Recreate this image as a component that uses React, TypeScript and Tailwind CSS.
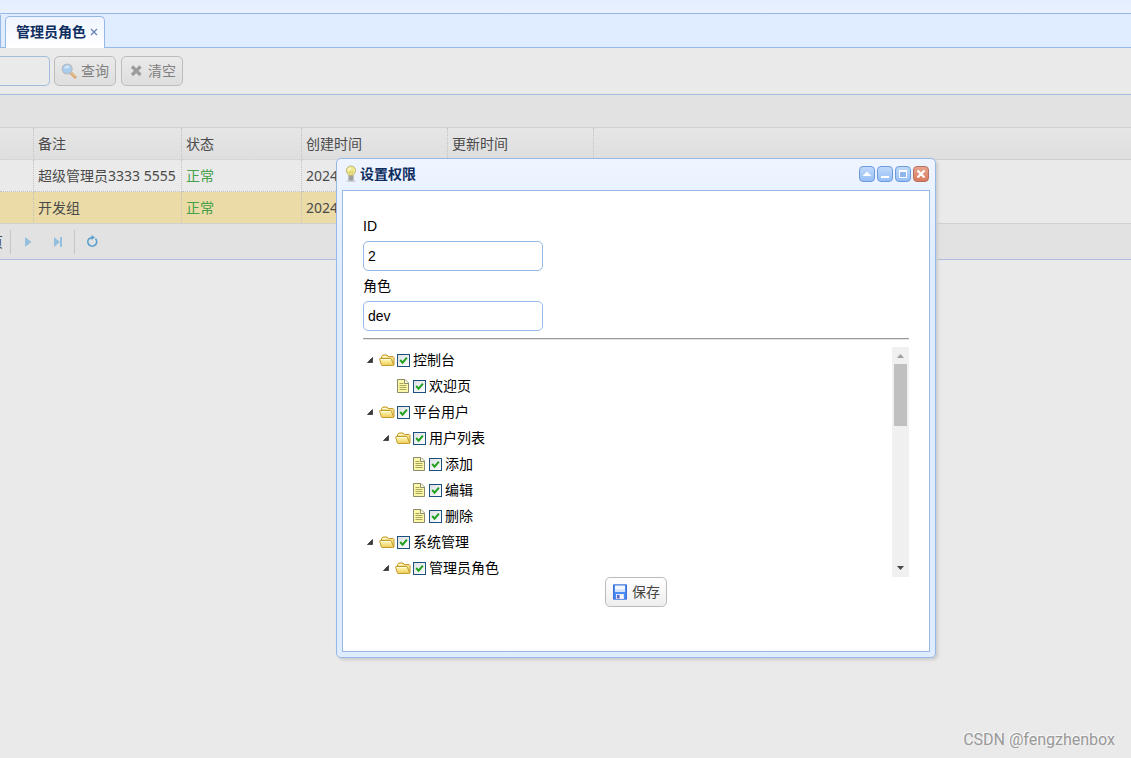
import React from "react";

const FolderIcon = () => (
  <svg className="h-[18px] w-4 shrink-0" viewBox="0 0 16 18">
    <defs>
      <linearGradient id="folder" x1="0" y1="0" x2="0" y2="1">
        <stop offset="0" stopColor="#fffbc4" />
        <stop offset="1" stopColor="#efcc55" />
      </linearGradient>
    </defs>
    <path d="M2.500 13.500V5.500l1.500-1.500h4l1.500 1.500h4.500l1 1v7.500z" fill="#f3df8a" stroke="#c39b2a" />
    <path d="M.6 8q0-.5.5-.5h10.400q.6 0 .8.600l2.200 5.400q.3 1-.6 1H3.200q-.6 0-.8-.6z" fill="url(#folder)" stroke="#c39b2a" />
    <path d="M3.500 5.500h4M1.800 8.500h9.500" stroke="#fffde2" />
  </svg>
);

const FileIcon = () => (
  <svg className="h-[18px] w-4 shrink-0" viewBox="0 0 16 18">
    <path d="M2.500 2.500h7.500l3.500 3.500v9.500h-11z" fill="#fbf8a8" stroke="#8b8a6c" />
    <path d="M9.500 2.500v4h4" fill="#fffde0" stroke="#8b8a6c" />
    <path d="M4.500 6.500h4M4.500 8.500h7M4.500 10.500h7M4.500 12.500h7" stroke="#aaa45c" />
  </svg>
);

const ExpandedArrow = () => (
  <svg className="h-[18px] w-4 shrink-0" viewBox="0 0 16 18">
    <path d="M9.500 6.500v5H4.500z" fill="#3c3c3c" stroke="#333" strokeWidth=".8" strokeLinejoin="round" />
  </svg>
);

const SearchIcon = () => (
  <svg className="size-4" viewBox="0 0 16 16">
    <path d="M9.500 9.500l4.500 4.500" stroke="#cf9c68" strokeWidth="3" strokeLinecap="round" />
    <path d="M10 9.500l4 4" stroke="#efc792" strokeWidth="1.200" strokeLinecap="round" />
    <circle cx="6.200" cy="6" r="4.900" fill="#a9cdec" stroke="#b4bcc5" strokeWidth="1.300" />
    <path d="M3 5.500a3.300 3.300 0 0 1 6-1.500q-2 2-6 1.500" fill="#d3e6f6" />
  </svg>
);

const ClearIcon = () => (
  <svg className="size-4" viewBox="0 0 16 16">
    <path d="M4 3.500l8.500 8.500M12.500 3.500L4 12" stroke="#9c9c9c" strokeWidth="3.200" />
  </svg>
);

const BulbIcon = () => (
  <svg className="h-[18px] w-4" viewBox="0 0 16 18">
    <ellipse cx="9" cy="16" rx="4.500" ry="1" fill="#c6ccd6" />
    <path d="M6.500 10.500C6.500 9 4.300 7.800 4.300 5.500a4.700 4.500 0 0 1 9.400 0c0 2.300-2.200 3.500-2.200 5z" fill="#efe98c" stroke="#bdb587" />
    <path d="M6 5.500a3 2.800 0 0 1 3-2.700q-.5 2-3 2.700" fill="#fffff0" />
    <path d="M8 10L7.500 6.500 9 7.500 10.500 6.500 10 10" fill="none" stroke="#d0c05c" strokeWidth=".7" />
    <path d="M6.500 11h5v3.500l-1 1.500h-3l-1-1.500z" fill="#b4b4b4" />
    <path d="M6.500 12h5M6.500 14h5" stroke="#777" strokeWidth=".7" />
  </svg>
);

const SaveIcon = () => (
  <svg className="size-4" viewBox="0 0 16 16">
    <path d="M1 .5h14v15H1z" fill="#4a8cf5" />
    <path d="M1.500 1h13v14h-13z" fill="none" stroke="#3c6fd6" />
    <path d="M3 1.500h10v6.500H3z" fill="#f2f6fd" />
    <path d="M3 5.500h10v2.500H3z" fill="#d3e2f7" />
    <path d="M4 10h8v5H4z" fill="#dfe0f4" />
    <path d="M5 11h2.500v3.500H5z" fill="#5f6cc4" />
    <path d="M8 10.500h3v4H8z" fill="#f8f8fc" />
  </svg>
);

const actionClass =
  "flex h-[30px] w-[62px] items-center justify-center gap-1 rounded-[5px] border text-sm";

type ToolProps = { label: string; color: "blue" | "red"; children: React.ReactNode };

const WindowTool = ({ label, color, children }: ToolProps) => (
  <button
    type="button"
    aria-label={label}
    className={
      color === "red"
        ? "size-4 rounded-[4px] border border-[#b5705f] bg-linear-to-b from-[#e9a48e] to-[#d87a5e]"
        : "size-4 rounded-[4px] border border-[#6b9bd8] bg-linear-to-b from-[#c0d9fb] to-[#97bff5]"
    }
  >
    <svg className="size-[14px]" viewBox="0 0 14 14">
      {children}
    </svg>
  </button>
);

type Node = { text: string; depth: number; leaf?: boolean };

const nodes: Node[] = [
  { text: "控制台", depth: 0 },
  { text: "欢迎页", depth: 1, leaf: true },
  { text: "平台用户", depth: 0 },
  { text: "用户列表", depth: 1 },
  { text: "添加", depth: 2, leaf: true },
  { text: "编辑", depth: 2, leaf: true },
  { text: "删除", depth: 2, leaf: true },
  { text: "系统管理", depth: 0 },
  { text: "管理员角色", depth: 1 },
];

const indents = ["pl-0", "pl-4", "pl-8"];

const TreeRow = ({ node }: { node: Node }) => (
  <li className={`flex h-[26px] items-center ${indents[node.depth]}`}>
    {node.leaf ? <span className="w-4" /> : <ExpandedArrow />}
    {node.leaf ? <FileIcon /> : <FolderIcon />}
    <label className="flex items-center gap-[3px] pl-0.5">
      <span className="relative size-[13px]">
        <input
          type="checkbox"
          defaultChecked
          className="peer block size-[13px] appearance-none border border-[#1c5180] bg-linear-to-br from-[#dde0e3] to-white"
        />
        <svg
          className="pointer-events-none absolute inset-0 hidden size-[13px] peer-checked:block"
          viewBox="0 0 13 13"
        >
          <path d="M3.200 6l2.400 2.700 4.300-5" fill="none" stroke="#21a121" strokeWidth="2" />
        </svg>
      </span>
      <span className="text-sm">{node.text}</span>
    </label>
  </li>
);

const rows = [
  { remark: "超级管理员3333 5555", status: "正常", created: "2024", selected: false },
  { remark: "开发组", status: "正常", created: "2024", selected: true },
];

const headCell = "border-r border-b border-dotted border-[#c2c2c2] border-b-[#cfcfcf] px-1 text-left font-normal";
const bodyCell = "overflow-hidden border-r border-b border-dotted border-[#c2c2c2] px-1 whitespace-nowrap";

const Pager = () => (
  <nav className="flex h-9 items-center border-b border-[#a9bdda] bg-[#e2e2e2]" aria-label="分页">
    <div className="flex w-[10px] justify-end overflow-hidden pr-[7px] text-sm">
      <span>页</span>
    </div>
    <span className="h-6 w-px bg-[#c6c6c6]" />
    <button type="button" aria-label="下一页" className="ml-[9px] size-4">
      <svg viewBox="0 0 16 16">
        <path d="M5 3v10l6.500-5z" fill="#94bfde" />
      </svg>
    </button>
    <button type="button" aria-label="末页" className="ml-[14px] size-4">
      <svg viewBox="0 0 16 16">
        <path d="M4 3v10l6-5zM10 3h2v10h-2z" fill="#94bfde" />
      </svg>
    </button>
    <span className="ml-2 h-6 w-px bg-[#c6c6c6]" />
    <button type="button" aria-label="刷新" className="ml-[9px] size-4">
      <svg viewBox="0 0 16 16">
        <path d="M11.500 4.800A4.400 4.400 0 1 1 5 4.800L8 3.500" fill="none" stroke="#599fcf" strokeWidth="1.700" />
        <path d="M7.500 1l3.500 2.500-3.500 2.500z" fill="#599fcf" />
      </svg>
    </button>
  </nav>
);

const fieldClass =
  "block h-[30px] w-[180px] rounded-[5px] border border-[#95b8e7] bg-white px-1 text-sm outline-none";

const PermissionWindow = () => (
  <section
    role="dialog"
    aria-labelledby="window-title"
    className="absolute top-[158px] left-[336px] w-[600px] rounded-[5px] border border-[#95b8e7] bg-linear-to-b from-[#eff5ff] to-[#e0ecff] to-20% px-[5px] pb-[5px] text-black shadow-[2px_2px_3px_#ccc]"
  >
    <header className="flex h-[31px] items-center pr-px pb-0.5">
      <BulbIcon />
      <h2 id="window-title" className="ml-0.5 flex-1 text-sm font-bold text-[#0e2d5f]">
        设置权限
      </h2>
      <div className="flex gap-0.5">
        <WindowTool label="折叠" color="blue">
          <path d="M2.500 9L7 4.500 11.500 9z" fill="#fff" />
        </WindowTool>
        <WindowTool label="最小化" color="blue">
          <path d="M3 9h8v2H3z" fill="#fff" />
        </WindowTool>
        <WindowTool label="最大化" color="blue">
          <path d="M3.500 4h7v6.500h-7z" fill="#8fb5ea" stroke="#fff" />
          <path d="M3 3h8v2H3z" fill="#fff" />
        </WindowTool>
        <WindowTool label="关闭" color="red">
          <path d="M3.500 3.500l7 7M10.500 3.500l-7 7" stroke="#fff" strokeWidth="2.300" />
        </WindowTool>
      </div>
    </header>
    <form className="border border-[#95b8e7] bg-white px-5 pt-[22px] pb-11" onSubmit={(e) => e.preventDefault()}>
      <label htmlFor="role-id" className="block h-7 text-sm leading-[26px]">
        ID
      </label>
      <input id="role-id" defaultValue="2" className={fieldClass} />
      <label htmlFor="role-name" className="mt-0.5 block h-7 text-sm leading-[26px]">
        角色
      </label>
      <input id="role-name" defaultValue="dev" className={fieldClass} />
      <hr className="my-[7px] h-0.5 border-t border-b border-t-[#9a9a9a] border-b-[#e3e3e3]" />
      <div className="flex h-[230px] overflow-hidden">
        <ul className="flex-1">
          {nodes.map((node) => (
            <TreeRow key={node.text} node={node} />
          ))}
        </ul>
        <div className="flex w-[17px] flex-col items-center bg-[#f0f0f0]">
          <button type="button" aria-label="向上滚动" className="h-[17px] w-full">
            <svg className="h-[17px] w-[17px]" viewBox="0 0 17 17">
              <path d="M5 11l3.500-4 3.500 4z" fill="#a0a0a0" />
            </svg>
          </button>
          <div className="h-[62px] w-[13px] bg-[#c0c0c0]" />
          <button type="button" aria-label="向下滚动" className="mt-auto h-[17px] w-full">
            <svg className="h-[17px] w-[17px]" viewBox="0 0 17 17">
              <path d="M5 6l3.500 4L12 6z" fill="#484848" />
            </svg>
          </button>
        </div>
      </div>
      <div className="flex justify-center">
        <button
          type="submit"
          className={`${actionClass} border-[#bbb] bg-linear-to-b from-white to-[#eee] text-[#444]`}
        >
          <SaveIcon />
          <span>保存</span>
        </button>
      </div>
    </form>
  </section>
);

export default function App() {
  return (
    <div className="relative flex min-h-screen flex-col bg-[#eaeaea] font-['Liberation_Sans','Noto_Sans_CJK_SC',sans-serif] text-[#4a4a4a]">
      <div className="h-[14px] border-b border-[#95b8e7] bg-linear-to-b from-[#e5eeff] to-[#e9f1ff]" />
      <div className="flex h-[34px] items-end border-b border-[#95b8e7] bg-[#e0ecff]">
        <div className="h-8 w-px bg-[#95b8e7]" />
        <div className="-mb-px ml-1 flex h-8 w-[100px] items-center gap-1 rounded-t-[5px] border border-b-0 border-[#95b8e7] bg-linear-to-b from-[#eff5ff] to-white pb-0.5 pl-[10px] text-[#0e2d5f]">
          <a href="#roles" className="text-sm font-bold">
            管理员角色
          </a>
          <button type="button" aria-label="关闭标签">
            <svg className="size-2" viewBox="0 0 8 8">
              <path d="M1 1l6 6M7 1L1 7" stroke="#6282b8" strokeWidth="1.200" />
            </svg>
          </button>
        </div>
      </div>

      <form
        className="flex h-[47px] items-center border-b border-[#a3bbdc]"
        onSubmit={(e) => e.preventDefault()}
      >
        <input
          aria-label="关键字"
          className="h-[30px] w-[50px] rounded-r-[5px] border border-l-0 border-[#a3bbdc] px-1 text-sm outline-none"
        />
        <button
          type="submit"
          className={`${actionClass} ml-1 border-[#bdbdbd] bg-linear-to-b from-[#eaeaea] to-[#dedede] text-[#808080]`}
        >
          <SearchIcon />
          <span>查询</span>
        </button>
        <button
          type="reset"
          className={`${actionClass} ml-[5px] border-[#bdbdbd] bg-linear-to-b from-[#eaeaea] to-[#dedede] text-[#808080]`}
        >
          <ClearIcon />
          <span>清空</span>
        </button>
      </form>

      <div className="h-[33px] border-b border-[#d0d0d0] bg-[#e2e2e2]" />
      <table className="w-full table-fixed border-separate border-spacing-0 font-['Noto_Sans','Noto_Sans_CJK_SC',sans-serif] text-sm leading-5">
        <colgroup>
          <col className="w-[34px]" />
          <col className="w-[148px]" />
          <col className="w-[120px]" />
          <col className="w-[146px]" />
          <col className="w-[146px]" />
          <col />
        </colgroup>
        <thead>
          <tr className="h-8 bg-linear-to-b from-[#e6e6e6] to-[#dedede]">
            <th className={headCell} />
            <th className={headCell}>备注</th>
            <th className={headCell}>状态</th>
            <th className={headCell}>创建时间</th>
            <th className={headCell}>更新时间</th>
            <th className="border-b border-[#cfcfcf]" />
          </tr>
        </thead>
        <tbody>
          {rows.map((row) => (
            <tr key={row.remark} className="h-8">
              {["", row.remark, row.status, row.created, ""].map((value, i) => (
                <td
                  key={i}
                  className={`${bodyCell} ${row.selected ? "bg-[#ebdba6]" : ""} ${i === 2 ? "text-[#46a04c]" : ""}`}
                >
                  {value}
                </td>
              ))}
              <td />
            </tr>
          ))}
        </tbody>
      </table>
      <div className="-mt-px border-t border-[#d0d0d0]">
        <Pager />
      </div>

      <PermissionWindow />

      <footer className="mt-auto flex justify-end pr-4 pb-1.5 font-[Roboto,'Liberation_Sans',sans-serif] text-base text-[#999] [text-shadow:-1px_-1px_0_#fafafa]">
        CSDN @fengzhenbox
      </footer>
    </div>
  );
}
